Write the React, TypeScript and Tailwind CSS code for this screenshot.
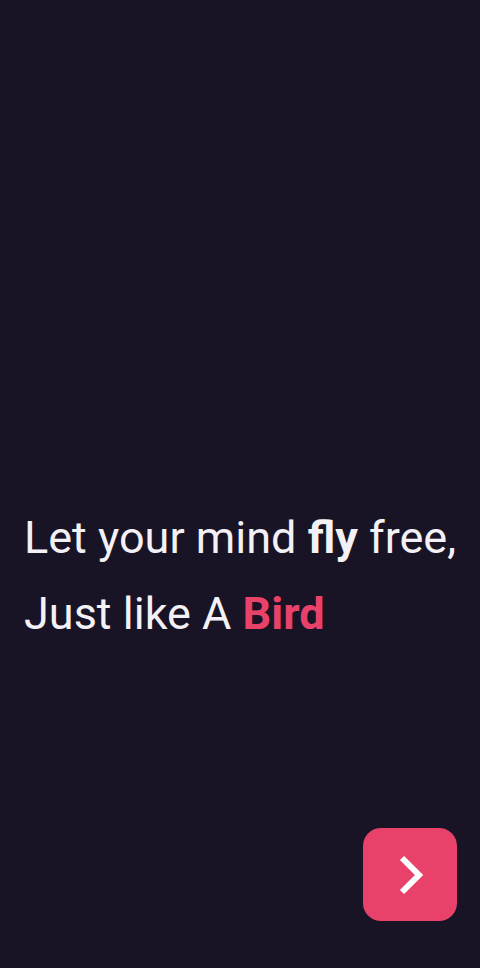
import React from "react";

const App: React.FC = () => {
  return (
    <div
      className="flex h-[968px] w-full flex-col bg-[#181426] text-[#f3f1f6]"
      style={{ fontFamily: "Roboto, 'Noto Sans', sans-serif" }}
    >
      {/* Headline */}
      <div className="flex flex-1 flex-col justify-end pl-6 pb-[176px] whitespace-nowrap">
        <p className="text-[45px] leading-[76px] font-normal">
          Let your mind <span className="font-bold">fly</span> free,
        </p>
        <p className="text-[45px] leading-[76px] font-normal">
          Just like A <span className="font-bold text-[#e8426a]">Bird</span>
        </p>
      </div>

      {/* Next button */}
      <div className="flex justify-end pr-[23px] pb-[47px]">
        <button className="flex h-[93px] w-[94px] items-center justify-center rounded-[18px] bg-[#e8426a]">
          <svg
            width="30"
            height="40"
            viewBox="0 0 30 40"
            fill="none"
            stroke="#ffffff"
            strokeWidth="6"
            strokeLinecap="butt"
            strokeLinejoin="miter"
          >
            <path d="M7 3 L24 20 L7 37" />
          </svg>
        </button>
      </div>
    </div>
  );
};

export default App;
